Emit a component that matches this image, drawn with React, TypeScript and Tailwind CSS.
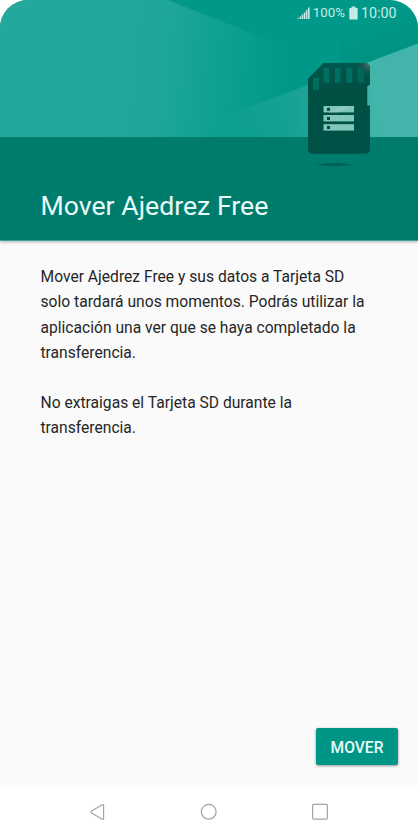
import type { ReactNode } from "react";

const NAV_STROKE = "#a3a3a3";

/** Teal backdrop: two light beams meeting behind the SD card. */
function HeaderArt() {
  return (
    <svg className="absolute inset-0 h-full w-full" viewBox="0 0 418 240.5" fill="none">
      <defs>
        <linearGradient id="beam-left" gradientUnits="userSpaceOnUse" x1="110" y1="60" x2="285" y2="77">
          <stop offset="0" stopColor="#23a89b" />
          <stop offset="0.3" stopColor="#1ea699" />
          <stop offset="0.65" stopColor="#0ca092" />
          <stop offset="1" stopColor="#009888" />
        </linearGradient>
        <linearGradient id="beam-right" gradientUnits="userSpaceOnUse" x1="215" y1="120" x2="375" y2="104">
          <stop offset="0" stopColor="#42b4a9" stopOpacity="0" />
          <stop offset="0.5" stopColor="#42b4a9" stopOpacity="0.36" />
          <stop offset="1" stopColor="#42b4a9" />
        </linearGradient>
        <linearGradient id="beam-shade" gradientUnits="userSpaceOnUse" x1="368" y1="22" x2="382" y2="58">
          <stop offset="0" stopColor="#009283" stopOpacity="0" />
          <stop offset="1" stopColor="#009283" />
        </linearGradient>
        <linearGradient id="card-face" x1="0" y1="0" x2="0" y2="1">
          <stop offset="0" stopColor="#00584c" />
          <stop offset="0.25" stopColor="#005044" />
          <stop offset="1" stopColor="#005246" />
        </linearGradient>
        <radialGradient id="card-glint" gradientUnits="userSpaceOnUse" cx="369" cy="64" r="17">
          <stop offset="0" stopColor="#4f756d" />
          <stop offset="0.4" stopColor="#24584f" stopOpacity="0.7" />
          <stop offset="1" stopColor="#00473e" stopOpacity="0" />
        </radialGradient>
        <radialGradient id="card-shadow">
          <stop offset="0" stopColor="#00584d" />
          <stop offset="0.55" stopColor="#006156" stopOpacity="0.85" />
          <stop offset="1" stopColor="#007869" stopOpacity="0" />
        </radialGradient>
      </defs>

      <rect width="418" height="240.5" fill="#009888" />
      <path d="M0 0H168L208 16L290 48V138H0Z" fill="url(#beam-left)" />
      <path d="M340 0H418V43.5L340 73.5Z" fill="url(#beam-shade)" />
      <path d="M418 43.5L208 122.5V138H418Z" fill="url(#beam-right)" />
      <rect y="137" width="418" height="103.5" fill="#007c6d" />

      {/* SD card */}
      <ellipse cx="334" cy="164.7" rx="23" ry="2.2" fill="url(#card-shadow)" />
      <path
        d="M323.5 63H365Q370 63 370 68V84.5L367.3 86.5V105.5H370V149Q370 153.7 365.5 153.7H312.5Q308 153.7 308 149V78.5Z"
        fill="url(#card-face)"
      />
      <path d="M346 63H365Q370 63 370 68V84.5L367.3 86.5H346Z" fill="url(#card-glint)" />
      <g fill="#006e60">
        <path d="M313 77.7H319V90H313Z" />
        <path d="M323.5 68H329.2V82.7H323.5Z" />
        <path d="M335 68H340.5V82.7H335Z" />
        <path d="M346.2 68H352.2V82.7H346.2Z" />
        <path d="M357.8 68H363.8V82.7H357.8Z" opacity="0.8" />
      </g>
      <g fill="#80c6bb">
        <rect x="323.5" y="106" width="30.5" height="6.4" />
        <rect x="323.5" y="115" width="30.5" height="6.4" />
        <rect x="323.5" y="124.2" width="30.5" height="6.4" />
      </g>
      <path d="M328 112.4L345 106H350L337 112.4Z" fill="#a1cdc4" opacity="0.6" />
      <g fill="#00473d">
        <rect x="327" y="107.8" width="3" height="3" />
        <rect x="327" y="117" width="3" height="3" />
        <rect x="327" y="126" width="3" height="3" />
      </g>
    </svg>
  );
}

function StatusBar() {
  return (
    <div className="relative flex h-[26px] items-center justify-end pr-[21.5px] text-[#c5ebe5]">
      <svg className="mr-[3px] h-[13px] w-[13px]" viewBox="0 0 13 13" fill="currentColor">
        <path d="M0.5 10.8h1.2V12H0.5zM2.6 9.5h1.5V12H2.6zM4.7 7.6h1.5V12H4.7zM6.8 5.5h1.5V12H6.8zM8.9 3h1.5v9H8.9zM11 0.5h1.6V12H11z" />
      </svg>
      <span className="text-[13.3px] leading-none">100%</span>
      <svg className="mr-[3px] ml-1 h-[14px] w-[9px]" viewBox="0 0 9 14" fill="currentColor">
        <path d="M2.5 0.5h4v1.5h1.4q0.8 0 0.8 0.8v9.9q0 0.8-0.8 0.8H1.1q-0.8 0-0.8-0.8V2.8q0-0.8 0.8-0.8h1.4z" />
      </svg>
      <span className="text-[14.3px] leading-none">10:00</span>
    </div>
  );
}

function NavButton({ label, children }: { label: string; children: ReactNode }) {
  return (
    <button type="button" aria-label={label} className="flex h-6 w-6 items-center justify-center">
      <svg className="h-5 w-5" viewBox="0 0 20 20" fill="none" stroke={NAV_STROKE} strokeWidth="1.2">
        {children}
      </svg>
    </button>
  );
}

export default function App() {
  return (
    <div className="flex h-[836px] w-[418px] flex-col overflow-hidden bg-white font-['Roboto',sans-serif]">
      <div className="flex h-[787px] flex-col overflow-hidden rounded-t-[28px] bg-[#fafafa]">
        <header className="relative flex h-[240.5px] shrink-0 flex-col justify-between shadow-[0_1px_3px_rgba(0,0,0,0.3)]">
          <HeaderArt />
          <StatusBar />
          <h1 className="relative mb-[19px] pl-[40.5px] text-[26.65px] leading-8 whitespace-nowrap text-[#e8fbf8]">
            Mover Ajedrez Free
          </h1>
        </header>

        <main className="flex-1 pt-[23.7px] pr-10 pl-[40.5px] text-[15.63px] leading-[25.2px] text-[#262626]">
          <p>
            Mover Ajedrez Free y sus datos a Tarjeta SD
            <br />
            solo tardará unos momentos. Podrás utilizar la
            <br />
            aplicación una ver que se haya completado la
            <br />
            transferencia.
          </p>
          <p className="mt-[25.2px]">
            No extraigas el Tarjeta SD durante la
            <br />
            transferencia.
          </p>
        </main>

        <div className="flex justify-end pr-5 pb-[22px]">
          <button
            type="button"
            className="h-[37px] w-[82px] rounded-[2px] bg-[#009687] pt-1 text-[15.6px] font-medium text-[#e8fbf8] shadow-[0_1px_3px_rgba(0,0,0,0.4)]"
          >
            MOVER
          </button>
        </div>
      </div>

      <nav className="flex h-[49px] items-center justify-between pr-[86px] pl-[86px]">
        <NavButton label="Atrás">
          <path d="M13.8 3.1L3.7 9.1Q2.3 10 3.7 10.9L13.8 16.9Q15.6 17.8 15.6 16V4Q15.6 2.2 13.8 3.1Z" />
        </NavButton>
        <NavButton label="Inicio">
          <circle cx="9.7" cy="9.8" r="7.4" />
        </NavButton>
        <NavButton label="Recientes">
          <rect x="2.6" y="2.4" width="14.8" height="14.8" rx="1.2" />
        </NavButton>
      </nav>
    </div>
  );
}
